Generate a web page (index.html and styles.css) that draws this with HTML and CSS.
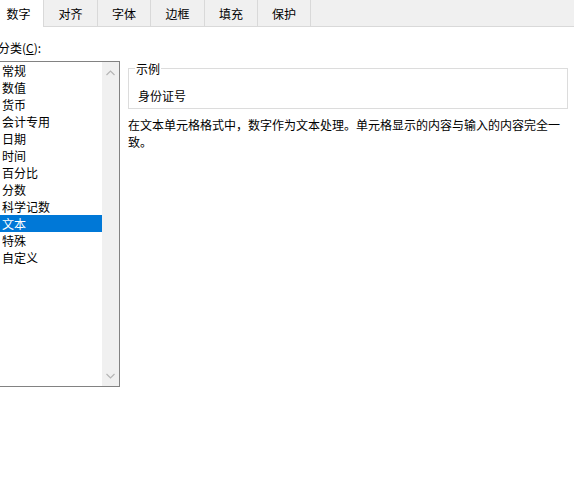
FILE: index.html
```html
<!DOCTYPE html>
<html lang="zh-CN">
<head>
<meta charset="utf-8">
<link rel="stylesheet" href="styles.css">
</head>
<body>
<div class="tabs">
  <div class="tab active w44">数字</div>
  <div class="tab w54">对齐</div>
  <div class="tab w53">字体</div>
  <div class="tab w54">边框</div>
  <div class="tab w53">填充</div>
  <div class="tab w53">保护</div>
</div>
<div class="main">
  <div class="left">
    <div class="label">分类(<u>C</u>):</div>
    <div class="listbox">
      <ul class="items">
        <li>常规</li>
        <li>数值</li>
        <li>货币</li>
        <li>会计专用</li>
        <li>日期</li>
        <li>时间</li>
        <li>百分比</li>
        <li>分数</li>
        <li>科学记数</li>
        <li class="sel">文本</li>
        <li>特殊</li>
        <li>自定义</li>
      </ul>
      <div class="scrollbar">
        <svg class="arrow" width="9" height="6" viewBox="0 0 9 6"><path d="M0.5 5 L4.5 1 L8.5 5" fill="none" stroke="#b5b5b5" stroke-width="1.2"/></svg>
        <svg class="arrow" width="9" height="6" viewBox="0 0 9 6"><path d="M0.5 1 L4.5 5 L8.5 1" fill="none" stroke="#b5b5b5" stroke-width="1.2"/></svg>
      </div>
    </div>
  </div>
  <div class="right">
    <fieldset class="sample">
      <legend>示例</legend>
      <div class="sample-text">身份证号</div>
    </fieldset>
    <p class="desc">在文本单元格格式中，数字作为文本处理。单元格显示的内容与输入的内容完全一致。</p>
  </div>
</div>
</body>
</html>
```
FILE: styles.css
```css
html, body {
  margin: 0;
  padding: 0;
  background: #ffffff;
  overflow: hidden;
}
body {
  font-family: "Microsoft YaHei", "Noto Sans CJK SC", "DejaVu Sans", sans-serif;
  font-size: 12px;
  line-height: 17px;
  color: #000;
  width: 574px;
  height: 486px;
}
.tabs {
  display: flex;
  height: 27px;
  box-sizing: border-box;
  background: #f0f0f0;
  border-bottom: 1px solid #d9d9d9;
}
.tab {
  box-sizing: border-box;
  height: 26px;
  border-right: 1px solid #d9d9d9;
  display: flex;
  align-items: center;
  justify-content: center;
  padding-top: 1px;
}
.tab.active {
  background: #fff;
  height: 27px;
  margin-bottom: -1px;
  padding-right: 6px;
  padding-top: 0;
}
.w44 { width: 44px; }
.w53 { width: 53px; }
.w54 { width: 54px; }
.main {
  display: flex;
  padding-top: 12px;
}
.left {
  margin-left: -3px;
  width: 123px;
  flex: none;
}
.label {
  padding-left: 1px;
  height: 17px;
}
.listbox {
  margin-top: 5px;
  height: 326px;
  box-sizing: border-box;
  border: 1px solid #828282;
  display: flex;
}
.items {
  list-style: none;
  margin: 0;
  padding: 0;
  flex: 1;
}
.items li {
  height: 17px;
  margin-left: 2px;
  padding-left: 2px;
}
.items li.sel {
  background: #0078d7;
  color: #fff;
}
.scrollbar {
  width: 17px;
  background: #f0f0f0;
  display: flex;
  flex-direction: column;
  justify-content: space-between;
  align-items: center;
  padding: 8px 0 7px;
}
.right {
  margin-left: 8px;
  margin-top: 21px;
  width: 440px;
}
.sample {
  margin: 0;
  padding: 0 8px 0 6px;
  border: 1px solid #dcdcdc;
  height: 49px;
  box-sizing: border-box;
  min-width: 0;
}
.sample legend {
  padding: 0 1px;
  line-height: 17px;
}
.sample-text {
  padding: 10px 0 0 3px;
}
.desc {
  margin: 7px 0 0;
}
```
